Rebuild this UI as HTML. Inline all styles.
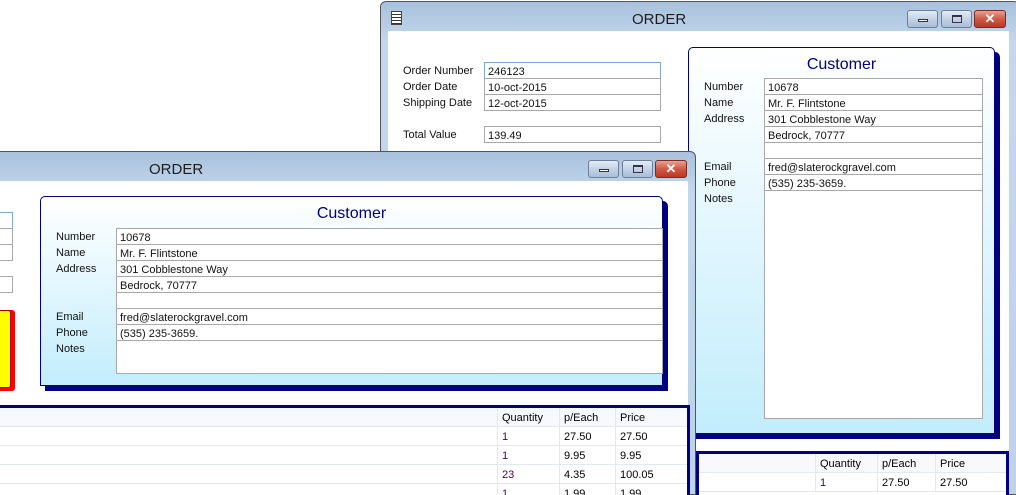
<!DOCTYPE html>
<html style="width:1016px;height:495px;overflow:hidden"><head><style>
*{margin:0;padding:0;box-sizing:border-box}
body{width:1016px;height:495px;overflow:hidden;background:#fff;position:relative;font-family:"Liberation Sans",sans-serif;font-size:11px;color:#000}
.a{position:absolute}
.frame{background:linear-gradient(#a9c1dc,#c3d7ec 40px,#bcd3ea);border:1px solid #555;border-radius:6px 6px 0 0}
.client{background:#fff;position:absolute}
.title{font-size:15px;color:#1e1e1e;position:absolute}
.btn{position:absolute;height:18px;border:1px solid #6d7e96;border-radius:3px;background:linear-gradient(#e3ecf6,#c3d3e6 50%,#a9bdd6)}
.btn.x{background:linear-gradient(#e8a193,#cf5a45 50%,#b83a26);border-color:#7a2b22}
.fld{position:absolute;border:1px solid #a8a8a8;background:#fff;height:17px;padding:3px 0 0 3px;font-size:11px;line-height:12px;color:#111}
.lbl{position:absolute;font-size:11px;color:#111}
.panel{position:absolute;border:1px solid #000080;border-radius:5px 5px 0 0;background:linear-gradient(#fff,#c2edfc);box-shadow:5px 5px 0 #000080}
.cust{position:absolute;left:0;right:0;text-align:center;color:#000080;font-size:16px}
.grid{position:absolute;border:3px solid #000080;border-bottom:none;background:#fff}
.row{position:absolute;left:0;right:0;border-bottom:1px solid #e2e8ee;height:19px}
.c{position:absolute;top:0;height:19px;border-left:1px solid #e2e8ee;padding:4px 0 0 4px;font-size:11px;line-height:12px}
.hd{background:#f7f9fc}
</style></head><body>

<div class="a frame" style="left:380px;top:1px;width:640px;height:494px"></div>
<div class="client" style="left:388px;top:31px;width:621px;height:464px"></div>
<div class="a" style="left:391px;top:11px;width:11px;height:14px;border:1px solid #444;background:repeating-linear-gradient(#fff 0 2px,#333 2px 3px)"></div>
<div class="title" style="left:632px;top:11px">ORDER</div>
<div class="btn" style="left:907px;top:10px;width:31px"><div class="a" style="left:10px;top:8px;width:10px;height:3px;border:1px solid #334;background:#fff"></div></div>
<div class="btn" style="left:941px;top:10px;width:31px"><div class="a" style="left:10px;top:4px;width:10px;height:8px;border:1px solid #334;border-top-width:2px"></div></div>
<div class="btn x" style="left:974px;top:10px;width:32px"><div class="a" style="left:0;right:0;top:0;text-align:center;color:#fff;font-weight:bold;font-size:13px">✕</div></div>

<div class="lbl" style="left:403px;top:65px">Order Number</div>
<div class="lbl" style="left:403px;top:81px">Order Date</div>
<div class="lbl" style="left:403px;top:97px">Shipping Date</div>
<div class="lbl" style="left:403px;top:129px">Total Value</div>
<div class="fld" style="left:484px;top:62px;width:177px;border-color:#7aa7d8">246123</div>
<div class="fld" style="left:484px;top:78px;width:177px">10-oct-2015</div>
<div class="fld" style="left:484px;top:94px;width:177px">12-oct-2015</div>
<div class="fld" style="left:484px;top:126px;width:177px">139.49</div>

<div class="panel" style="left:688px;top:47px;width:307px;height:387px">
<div class="cust" style="top:8px">Customer</div></div>
<div class="lbl" style="left:704px;top:81px">Number</div>
<div class="lbl" style="left:704px;top:97px">Name</div>
<div class="lbl" style="left:704px;top:113px">Address</div>
<div class="lbl" style="left:704px;top:161px">Email</div>
<div class="lbl" style="left:704px;top:177px">Phone</div>
<div class="lbl" style="left:704px;top:193px">Notes</div>
<div class="fld" style="left:764px;top:78px;width:219px">10678</div>
<div class="fld" style="left:764px;top:94px;width:219px">Mr. F. Flintstone</div>
<div class="fld" style="left:764px;top:110px;width:219px">301 Cobblestone Way</div>
<div class="fld" style="left:764px;top:126px;width:219px">Bedrock, 70777</div>
<div class="fld" style="left:764px;top:142px;width:219px"></div>
<div class="fld" style="left:764px;top:158px;width:219px">fred@slaterockgravel.com</div>
<div class="fld" style="left:764px;top:174px;width:219px">(535) 235-3659.</div>
<div class="fld" style="left:764px;top:190px;width:219px;height:229px"></div>

<div class="grid" style="left:696px;top:451px;width:313px;height:44px">
<div class="row hd" style="top:0"><div class="c" style="left:116px">Quantity</div><div class="c" style="left:178px">p/Each</div><div class="c" style="left:236px">Price</div></div>
<div class="row" style="top:19px"><div class="c" style="left:116px;color:#4b0050">1</div><div class="c" style="left:178px">27.50</div><div class="c" style="left:236px">27.50</div></div>
</div>

<div class="a frame" style="left:-10px;top:151px;width:706px;height:344px"></div>
<div class="client" style="left:0;top:181px;width:688px;height:314px"></div>
<div class="title" style="left:149px;top:161px">ORDER</div>
<div class="btn" style="left:588px;top:160px;width:31px"><div class="a" style="left:10px;top:8px;width:10px;height:3px;border:1px solid #334;background:#fff"></div></div>
<div class="btn" style="left:622px;top:160px;width:31px"><div class="a" style="left:10px;top:4px;width:10px;height:8px;border:1px solid #334;border-top-width:2px"></div></div>
<div class="btn x" style="left:655px;top:160px;width:32px"><div class="a" style="left:0;right:0;top:0;text-align:center;color:#fff;font-weight:bold;font-size:13px">✕</div></div>

<div class="fld" style="left:-5px;top:212px;width:18px;border-color:#7aa7d8"></div>
<div class="fld" style="left:-5px;top:228px;width:18px"></div>
<div class="fld" style="left:-5px;top:244px;width:18px"></div>
<div class="fld" style="left:-5px;top:276px;width:18px"></div>
<div class="a" style="left:-5px;top:310px;width:20px;height:81px;background:#f00;border-radius:3px"></div>
<div class="a" style="left:-5px;top:310px;width:16px;height:78px;background:#ff0;border:1px solid #a00;border-radius:3px"></div>

<div class="panel" style="left:40px;top:196px;width:623px;height:190px">
<div class="cust" style="top:8px">Customer</div></div>
<div class="lbl" style="left:56px;top:231px">Number</div>
<div class="lbl" style="left:56px;top:247px">Name</div>
<div class="lbl" style="left:56px;top:263px">Address</div>
<div class="lbl" style="left:56px;top:311px">Email</div>
<div class="lbl" style="left:56px;top:327px">Phone</div>
<div class="lbl" style="left:56px;top:343px">Notes</div>
<div class="fld" style="left:116px;top:228px;width:547px">10678</div>
<div class="fld" style="left:116px;top:244px;width:547px">Mr. F. Flintstone</div>
<div class="fld" style="left:116px;top:260px;width:547px">301 Cobblestone Way</div>
<div class="fld" style="left:116px;top:276px;width:547px">Bedrock, 70777</div>
<div class="fld" style="left:116px;top:292px;width:547px"></div>
<div class="fld" style="left:116px;top:308px;width:547px">fred@slaterockgravel.com</div>
<div class="fld" style="left:116px;top:324px;width:547px">(535) 235-3659.</div>
<div class="fld" style="left:116px;top:340px;width:547px;height:34px"></div>

<div class="grid" style="left:-5px;top:405px;width:695px;height:90px">
<div class="row hd" style="top:0"><div class="c" style="left:499px">Quantity</div><div class="c" style="left:561px">p/Each</div><div class="c" style="left:617px">Price</div></div>
<div class="row" style="top:19px"><div class="c" style="left:499px;color:#4b0050">1</div><div class="c" style="left:561px">27.50</div><div class="c" style="left:617px">27.50</div></div>
<div class="row" style="top:38px"><div class="c" style="left:499px;color:#4b0050">1</div><div class="c" style="left:561px">9.95</div><div class="c" style="left:617px">9.95</div></div>
<div class="row" style="top:57px"><div class="c" style="left:499px;color:#4b0050">23</div><div class="c" style="left:561px">4.35</div><div class="c" style="left:617px">100.05</div></div>
<div class="row" style="top:76px"><div class="c" style="left:499px;color:#4b0050">1</div><div class="c" style="left:561px">1.99</div><div class="c" style="left:617px">1.99</div></div>
</div>
</body></html>
